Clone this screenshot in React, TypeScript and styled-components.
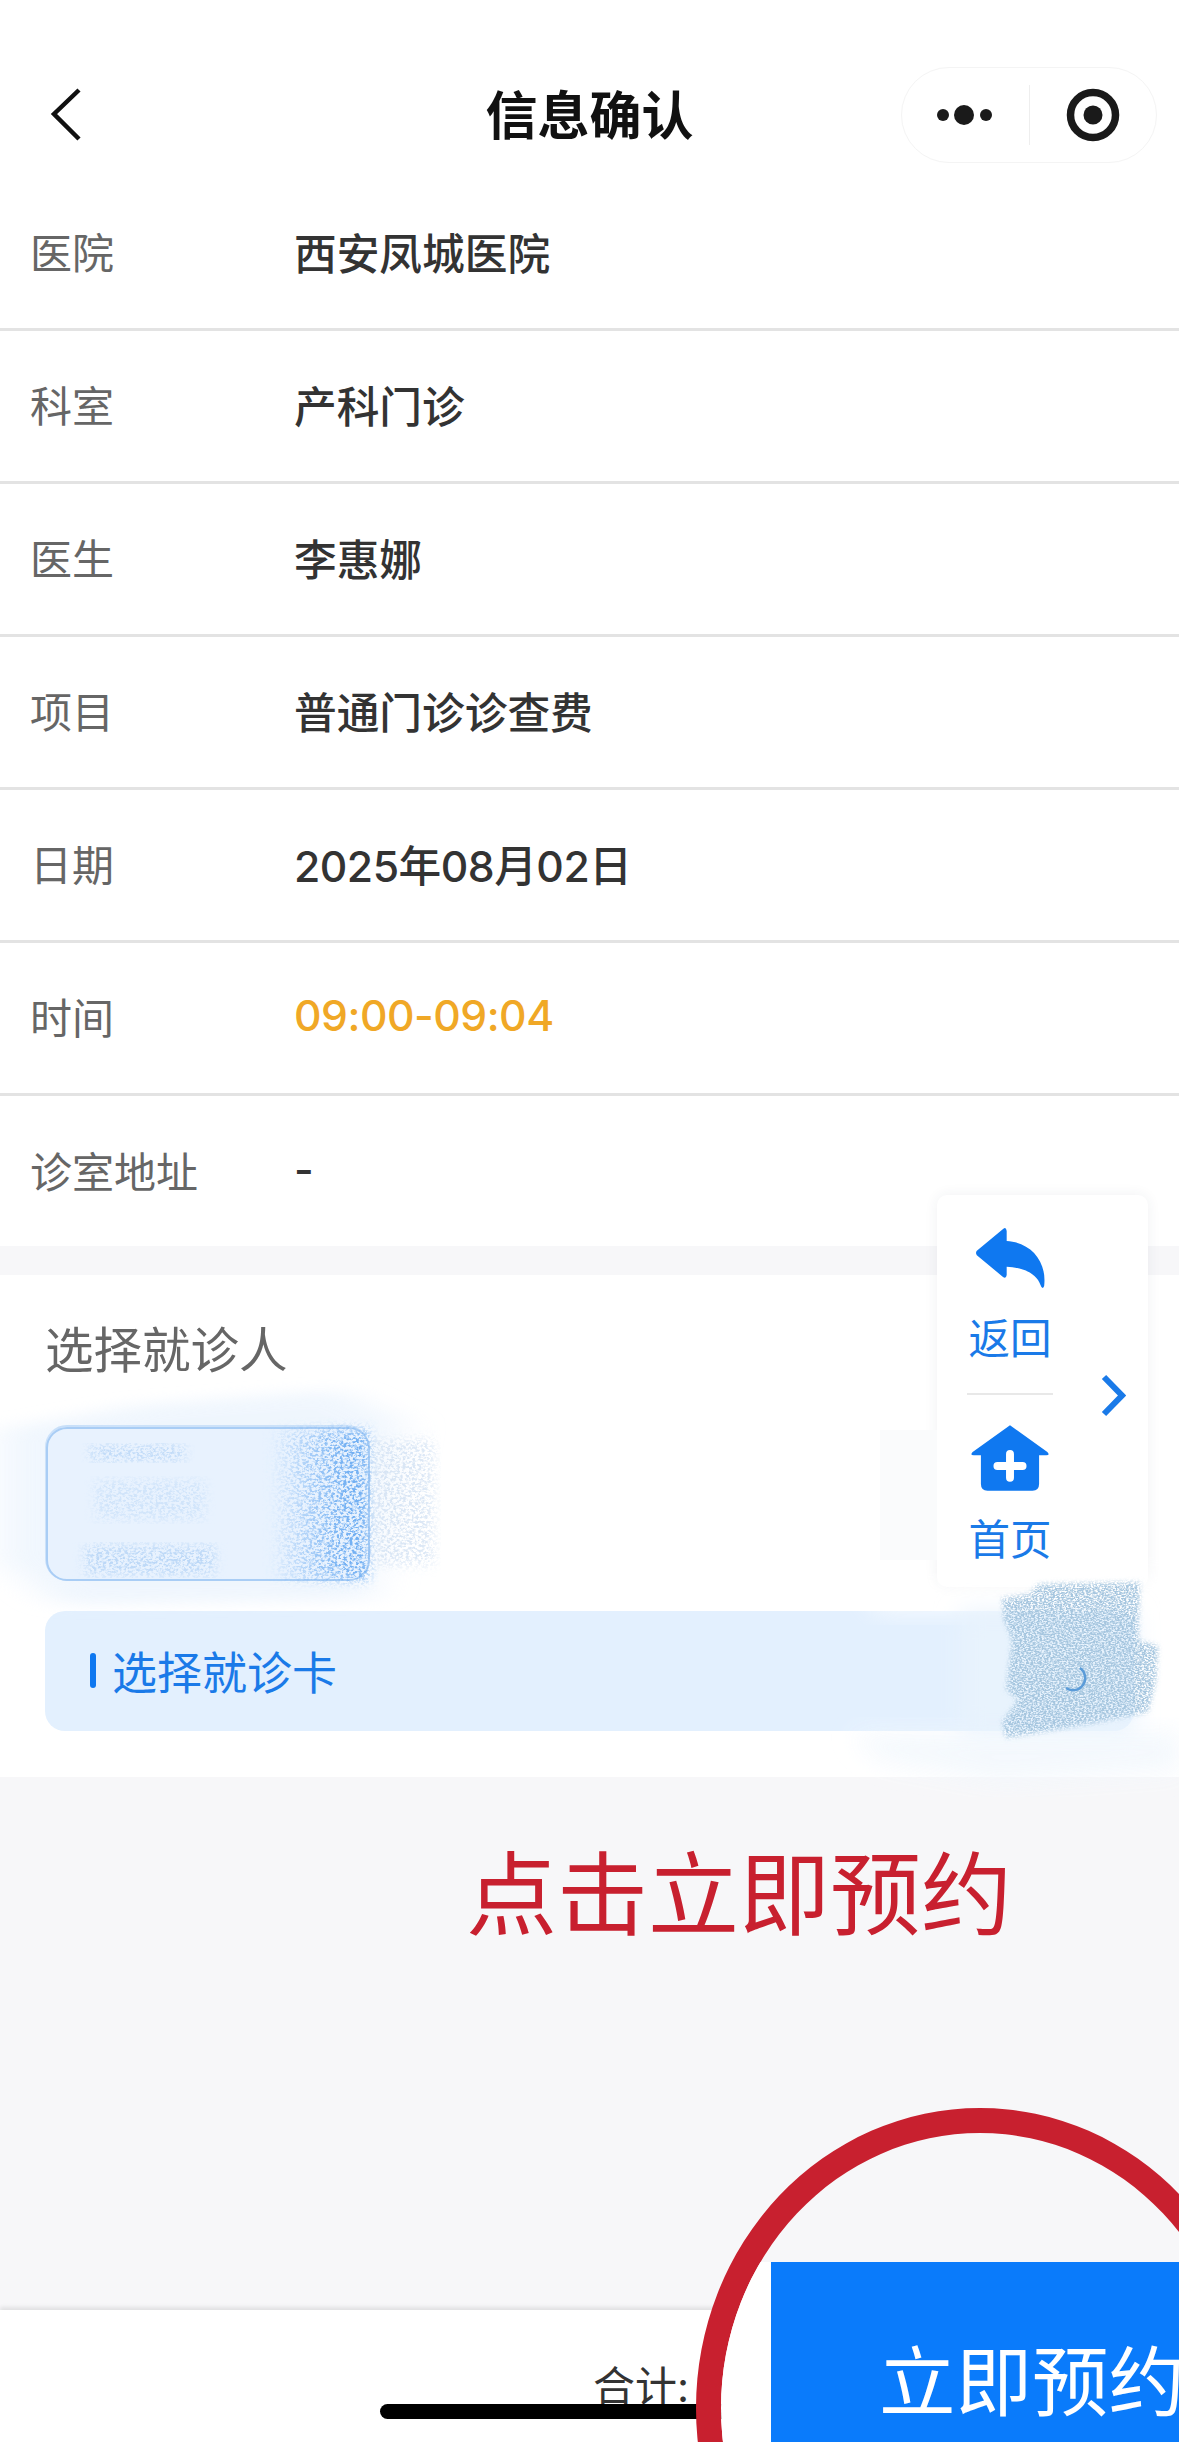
import React from "react";
import styled, { createGlobalStyle } from "styled-components";

const Global = createGlobalStyle`
  html, body { margin: 0; padding: 0; background: #fff; }
  body { font-family: Inter, "Noto Sans CJK SC", sans-serif; }
`;

const Page = styled.div`
  position: relative;
  width: 1179px;
  height: 2442px;
  overflow: hidden;
  display: flex;
  flex-direction: column;
  background: #f7f7f9;
`;

const Nav = styled.header`
  height: 178px;
  box-sizing: border-box;
  padding: 67px 22px 15px 22px;
  display: grid;
  grid-template-columns: 1fr auto 1fr;
  align-items: start;
  background: #fff;
`;
const BackButton = styled.svg`
  width: 34px;
  height: 56px;
  margin: 20px 0 0 28px;
`;
const Title = styled.h1`
  margin: 19px 0 0;
  font-size: 52px;
  line-height: 62px;
  font-weight: 700;
  color: #111;
`;
const Capsule = styled.div`
  justify-self: end;
  width: 256px;
  height: 96px;
  box-sizing: border-box;
  border: 1px solid #f4f4f4;
  border-radius: 48px;
  display: flex;
  align-items: center;
  background: #fff;
`;
const CapsulePart = styled.div`
  flex: 1;
  display: flex;
  justify-content: center;
  align-items: center;
`;
const CapsuleDivider = styled.div`
  width: 1px;
  height: 60px;
  background: #eee;
`;

const Rows = styled.section`
  background: #fff;
`;
const Row = styled.div`
  height: 153px;
  box-sizing: border-box;
  padding: 0 0 5px 30px;
  display: flex;
  align-items: center;
  border-bottom: 3px solid #e3e3e3;
  &:last-child { border-bottom: 0; height: 150px; padding-bottom: 3px; }
`;
const Label = styled.span`
  width: 264px;
  font-size: 42px;
  color: #666;
`;
const Value = styled.span<{ $accent?: boolean; $numeric?: boolean }>`
  font-size: 42.7px;
  font-weight: 500;
  letter-spacing: ${(p) => (p.$numeric ? "-0.5px" : "0")};
  color: ${(p) => (p.$accent ? "#f0a826" : "#333")};
`;

const PatientSection = styled.section`
  margin-top: 29px;
  height: 502px;
  box-sizing: border-box;
  padding: 52px 45px 0;
  background: #fff;
`;
const SectionTitle = styled.h2`
  margin: 0;
  font-size: 48.5px;
  line-height: 48px;
  font-weight: 400;
  color: #666;
`;
const PatientCard = styled.div`
  margin-top: 50px;
  width: 324px;
  height: 156px;
  box-sizing: border-box;
  border: 2px solid #a9cdf5;
  border-radius: 22px;
  background: #e8f2fe;
`;
const CardSelect = styled.div`
  margin-top: 30px;
  height: 120px;
  box-sizing: border-box;
  padding: 0 0 2px 45px;
  display: flex;
  align-items: center;
  gap: 16px;
  border-radius: 20px;
  background: #e3f0fe;
  font-size: 45px;
  color: #1a7ae8;
`;
const Tick = styled.span`
  width: 6px;
  height: 35px;
  border-radius: 3px;
  background: #0f78f0;
`;

const Callout = styled.div`
  flex: 1;
  padding: 68px 0 0 466px;
  font-size: 91px;
  line-height: 100px;
  font-weight: 400;
  color: #c8202f;
`;

const Footer = styled.footer`
  height: 132px;
  box-sizing: border-box;
  padding: 56px 0 0 593px;
  background: #fff;
  box-shadow: 0 -3px 4px rgba(0, 0, 0, 0.09);
  font-size: 42px;
  line-height: 42px;
  color: #333;
`;

const HomeIndicator = styled.div`
  position: absolute;
  left: 380px;
  top: 2404px;
  width: 419px;
  height: 15px;
  border-radius: 8px;
  background: #000;
`;

const FloatPanel = styled.aside`
  position: absolute;
  left: 937px;
  top: 1195px;
  width: 211px;
  height: 392px;
  box-sizing: border-box;
  padding: 32px 0 0 30px;
  border-radius: 10px;
  background: #fff;
  box-shadow: 0 0 14px rgba(40, 60, 90, 0.07);
  display: flex;
  flex-direction: column;
  color: #1a7ae8;
`;
const PanelItem = styled.div`
  width: 86px;
  display: flex;
  flex-direction: column;
  align-items: center;
  font-size: 41.5px;
  line-height: 44px;
  white-space: nowrap;
`;
const PanelIcon = styled.svg<{ $gap: number }>`
  display: block;
  margin-bottom: ${(p) => p.$gap}px;
`;
const PanelLine = styled.div`
  width: 86px;
  height: 2px;
  margin: 32px 0 30px;
  background: #e8e8e8;
`;
const PanelChevron = styled.svg`
  position: absolute;
  left: 163px;
  top: 179px;
  width: 26px;
  height: 43px;
`;

const Lens = styled.div`
  position: absolute;
  left: 696px;
  top: 2108px;
  width: 568px;
  height: 600px;
  box-sizing: border-box;
  border: 25px solid #c8202f;
  border-radius: 50%;
  overflow: hidden;
`;
const LensStrip = styled.div`
  margin-top: 129px;
  height: 460px;
  padding-left: 50px;
  background: #fff;
`;
const BookButton = styled.div`
  height: 240px;
  padding-left: 108px;
  background: #0a7bfb;
  color: #fff;
  font-size: 76.5px;
  line-height: 240px;
  white-space: nowrap;
`;

const Smudge = styled.svg`
  position: absolute;
  left: 0;
  top: 1360px;
  width: 1179px;
  height: 440px;
  pointer-events: none;
`;

const rows: [string, string, boolean?, boolean?][] = [
  ["医院", "西安凤城医院"],
  ["科室", "产科门诊"],
  ["医生", "李惠娜"],
  ["项目", "普通门诊诊查费"],
  ["日期", "2025年08月02日", false, true],
  ["时间", "09:00-09:04", true, true],
  ["诊室地址", "-"],
];

export default function App() {
  return (
    <Page>
      <Global />
      <Nav>
        <BackButton viewBox="0 0 34 56">
          <polyline points="29,3 4,27 29,52" fill="none" stroke="#111" strokeWidth="4.5" />
        </BackButton>
        <Title>信息确认</Title>
        <Capsule>
          <CapsulePart>
            <svg width="60" height="24" viewBox="0 0 60 24">
              <circle cx="8" cy="12" r="6" fill="#1a1a1a" />
              <circle cx="29" cy="12" r="10" fill="#1a1a1a" />
              <circle cx="51" cy="12" r="6" fill="#1a1a1a" />
            </svg>
          </CapsulePart>
          <CapsuleDivider />
          <CapsulePart>
            <svg width="54" height="54" viewBox="0 0 54 54">
              <circle cx="27" cy="27" r="22.5" fill="none" stroke="#1a1a1a" strokeWidth="7.5" />
              <circle cx="27" cy="27" r="9.5" fill="#1a1a1a" />
            </svg>
          </CapsulePart>
        </Capsule>
      </Nav>

      <Rows>
        {rows.map(([k, v, accent, numeric]) => (
          <Row key={k}>
            <Label>{k}</Label>
            <Value $accent={accent} $numeric={numeric}>{v}</Value>
          </Row>
        ))}
      </Rows>

      <PatientSection>
        <SectionTitle>选择就诊人</SectionTitle>
        <PatientCard />
        <CardSelect>
          <Tick />
          选择就诊卡
        </CardSelect>
      </PatientSection>

      <Callout>点击立即预约</Callout>

      <Footer>合计:</Footer>
      <HomeIndicator />

      <FloatPanel>
        <PanelItem>
          <PanelIcon $gap={27} width="70" height="63" viewBox="345 200 210 190">
            <path
              d="M430 205Q438 198 440 212L440 242C510 246 562 300 553 378Q548 392 542 375C530 340 490 322 440 320L440 345Q438 358 428 350L350 285Q345 278 350 272Z"
              fill="#0f78f0"
            />
          </PanelIcon>
          返回
        </PanelItem>
        <PanelLine />
        <PanelItem>
          <PanelIcon $gap={27} width="78" height="66" viewBox="332 797 236 198">
            <path
              d="M450 797L563 878Q572 888 560 888L538 888L538 975Q538 995 518 995L382 995Q362 995 362 975L362 888L340 888Q328 888 337 878Z"
              fill="#0f78f0"
            />
            <path d="M450 884L450 956M412 920L488 920" stroke="#fff" strokeWidth="24" strokeLinecap="round" />
          </PanelIcon>
          首页
        </PanelItem>
        <PanelChevron viewBox="0 0 26 43">
          <polyline points="4,3 22,21.5 4,40" fill="none" stroke="#1a7ae8" strokeWidth="6" />
        </PanelChevron>
      </FloatPanel>

      <Smudge viewBox="0 1360 1179 440">
        <defs>
          <filter id="soft" x="-20%" y="-30%" width="140%" height="160%">
            <feGaussianBlur stdDeviation="12" />
          </filter>
          <filter id="streak" x="-20%" y="-30%" width="140%" height="160%">
            <feGaussianBlur stdDeviation="22 7" />
          </filter>
          <filter id="grain" x="-10%" y="-10%" width="120%" height="120%">
            <feGaussianBlur in="SourceGraphic" stdDeviation="6" result="b" />
            <feTurbulence type="fractalNoise" baseFrequency="0.32 0.42" numOctaves="4" seed="4" result="n" />
            <feColorMatrix in="n" type="matrix" values="0 0 0 0 0 0 0 0 0 0 0 0 0 0 0 0 0 0 4.5 -1.9" result="m" />
            <feComposite in="b" in2="m" operator="in" />
          </filter>
          <filter id="grainTight" x="-10%" y="-10%" width="120%" height="120%">
            <feGaussianBlur in="SourceGraphic" stdDeviation="2.5" result="b" />
            <feTurbulence type="fractalNoise" baseFrequency="0.45 0.7" numOctaves="3" seed="9" result="n" />
            <feColorMatrix in="n" type="matrix" values="0 0 0 0 0 0 0 0 0 0 0 0 0 0 0 0 0 0 3.5 -1.15" result="m" />
            <feComposite in="b" in2="m" operator="in" />
          </filter>
          <linearGradient id="cardFade" x1="0" x2="1" y1="0" y2="0">
            <stop offset="0" stopColor="#5ea4f0" stopOpacity="0" />
            <stop offset="0.7" stopColor="#5ea4f0" stopOpacity="0.8" />
            <stop offset="1" stopColor="#5ea4f0" stopOpacity="0.9" />
          </linearGradient>
        </defs>

        {/* haze round the hidden patient card */}
        <path d="M0 1430L140 1405L340 1390L400 1420L370 1600L60 1605L0 1560Z" fill="#e6f1fd" opacity="0.6" filter="url(#streak)" />
        <rect x="47" y="1428" width="322" height="152" rx="20" fill="#e8f2fe" />
        <rect x="47" y="1428" width="322" height="152" rx="20" fill="none" stroke="#a9cdf5" strokeWidth="2" />

        {/* grain over the card */}
        <rect x="270" y="1430" width="99" height="150" fill="url(#cardFade)" filter="url(#grain)" />
        <rect x="90" y="1445" width="95" height="16" fill="#bcd8f7" filter="url(#grain)" />
        <rect x="95" y="1480" width="110" height="40" fill="#d0e4fa" filter="url(#grain)" />
        <rect x="85" y="1545" width="130" height="30" fill="#bcd8f7" filter="url(#grain)" />
        <rect x="372" y="1440" width="62" height="125" fill="#c4d8ef" filter="url(#grain)" opacity="0.6" />

        {/* faint ghost of a second card */}
        <rect x="880" y="1430" width="57" height="130" fill="#fafbfc" />

        {/* white haze over the right end of the select bar */}
        <path d="M860 1590L1179 1570L1179 1612L880 1612Z" fill="#fff" opacity="0.75" filter="url(#soft)" />
        <path d="M850 1735L1179 1732L1179 1770L1000 1782L880 1760Z" fill="#f3f8fd" opacity="0.9" filter="url(#soft)" />
        <path d="M960 1612L1134 1612L1134 1732L960 1732Z" fill="#e8f3fd" filter="url(#soft)" />

        {/* scribble over the amount */}
        <path
          d="M1002 1598L1030 1594L1038 1584L1140 1582L1138 1640L1158 1646L1156 1680L1148 1712L1100 1722L1006 1738L1002 1722L1018 1700L1006 1690L1012 1640L1004 1620Z"
          fill="#a6c6df"
          filter="url(#grainTight)"
        />
        <path d="M1080 1668A11 11 0 0 1 1066 1688" fill="none" stroke="#5a9bd8" strokeWidth="2.5" />
      </Smudge>

      <Lens>
        <LensStrip>
          <BookButton>立即预约</BookButton>
        </LensStrip>
      </Lens>
    </Page>
  );
}
